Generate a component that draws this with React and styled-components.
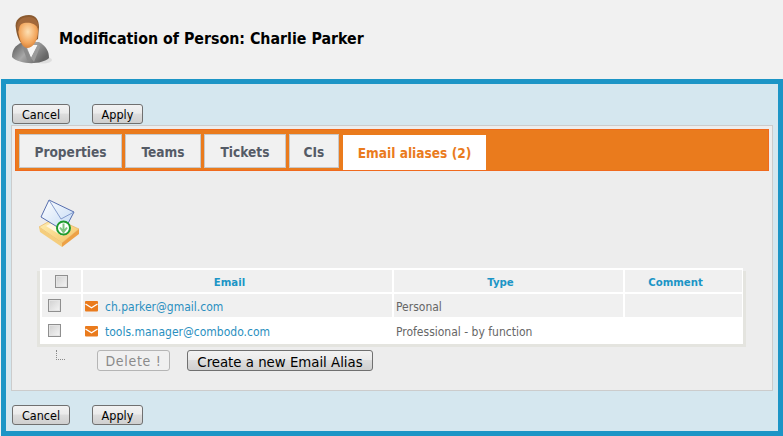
import React from "react";
import styled, { createGlobalStyle } from "styled-components";

const FONT = `"DejaVu Sans Condensed", "DejaVu Sans", sans-serif`;

const Global = createGlobalStyle`
  html, body { margin: 0; padding: 0; background: #f1f1f1; }
  body { font-family: ${FONT}; font-stretch: condensed; overflow: hidden; }
  * { box-sizing: border-box; }
`;
const Page = styled.div`width: 783px; height: 436px; display: flex; flex-direction: column;`;
const Header = styled.header`height: 79px; display: flex; align-items: center; gap: 7px; padding: 0 0 3px 11px; flex: none;`;
const Title = styled.h1`margin: 2px 0 0; font-size: 15.8px; line-height: 20px; font-weight: 700; color: #000;`;
const Main = styled.main`
  flex: 1; margin-left: 1px; border: 5px solid #1c95c6; background: #d5e7ef;
  padding: 20px 5px 0 5px; display: flex; flex-direction: column;
`;
const Actions = styled.div`display: flex; gap: 22px; padding-left: 1px; height: 20px; flex: none;`;
const Btn = styled.button`
  width: ${p => p.$w}px; height: ${p => p.$h || 20}px; padding: 1px 0 0; margin: 0;
  border: 1px solid ${p => (p.disabled ? "#b5b5b5" : "#707070")}; border-radius: 3px;
  background: ${p => (p.disabled ? "#f0f0f0" : "linear-gradient(#f2f2f2 0%, #ebebeb 45%, #dddddd 50%, #cfcfcf 100%)")};
  font-family: ${FONT}; font-stretch: condensed; font-size: ${p => p.$fs || 12.5}px;
  letter-spacing: ${p => p.$ls || 0}px; color: ${p => (p.disabled ? "#8a8a8a" : "#000")};
`;
const Panel = styled.section`
  width: 762px; height: 266px; margin-top: 1px; flex: none; border: 1px solid #cccccc; background: #ededed;
  padding: 3px 3px 0 3px; display: flex; flex-direction: column;
`;
const TabBar = styled.nav`
  height: 42px; background: #ea7b1d; border: 1px solid #f06a1e; display: flex; align-items: flex-end; padding-left: 3px; gap: 3px; flex: none;
`;
const Tab = styled.div`
  width: ${p => p.$w}px; height: ${p => (p.$active ? 35 : 34)}px; margin-bottom: ${p => (p.$active ? 0 : 2)}px;
  margin-left: ${p => (p.$active ? 1 : 0)}px;
  background: ${p => (p.$active ? "#ffffff" : "#f1f1f1")}; border: ${p => (p.$active ? "none" : "1px solid #c8c8c8")};
  color: ${p => (p.$active ? "#ea7b1d" : "#555b66")}; font-size: 13.6px; font-weight: 700;
  display: flex; align-items: center; justify-content: center; padding-top: ${p => (p.$active ? 0 : 1)}px;
`;
const Body = styled.div`padding: 28px 0 0 23px; display: flex; flex-direction: column; align-items: flex-start;`;
const MailIcon = styled.svg`display: block; width: 44px; height: 48px;`;
const Table = styled.table`
  margin: 21px 0 0 2px; width: 703px; border-collapse: separate; border-spacing: 0; background: #fff;
  table-layout: fixed; box-shadow: 3px 3px 0 #e4e4df, -3px 3px 0 #e4e4df; font-size: 12px;
`;
const Th = styled.th`
  height: 26px; background: #f0f0f0; border: 2px solid #fff; border-left-width: ${p => (p.$first ? 2 : 1)}px; border-right-width: 1px;
  color: #1c95c6; font-size: 11.3px; font-weight: 700; padding: ${p => (p.$first ? 0 : "2px 16px 0 0")}; text-align: center;
`;
const Td = styled.td`
  height: ${p => p.$h}px; padding: 2px 0 0 2px; color: #666; font-size: 12px; background: ${p => (p.$odd ? "#f0f0f0" : "#fff")};
  border-left: 1px solid #fff; border-right: 1px solid #fff; white-space: nowrap;
`;
const CheckCell = styled.td`
  height: ${p => p.$h}px; padding: 0 0 0 6px; background: ${p => (p.$odd ? "#f0f0f0" : "#fff")};
  border-left: 2px solid #fff; border-right: 1px solid #fff;
`;
const Check = styled.input.attrs({ type: "checkbox" })`
  appearance: none; display: block; width: 13px; height: 13px; margin: ${p => (p.$center ? "0 auto" : "0")};
  border: 1px solid #8f8f8f; background: linear-gradient(135deg, #d0d0d0, #f5f5f5); box-shadow: inset 0 0 0 1px #e4e4e4;
`;
const EmailLink = styled.a`display: flex; align-items: center; gap: 7px; color: #2a8fc0; font-size: 12px;`;
const EnvelopeIcon = styled.svg`display: block; flex: none;`;
const Below = styled.div`display: flex; align-items: flex-start; margin-top: 6px;`;
const Tree = styled.div`
  width: 9px; height: 10px; margin: 0 0 0 18px; border-left: 1px dotted #8a8a8a; border-bottom: 1px dotted #8a8a8a;
`;
const BelowButtons = styled.div`display: flex; gap: 17px; margin-left: 32px;`;
const FooterActions = styled(Actions)`margin-top: 14px;`;
const PersonIcon = styled.svg`display: block; flex: none; margin-top: 4px;`;

const Envelope = () => (
  <EnvelopeIcon width="13" height="11" viewBox="0 0 13 11">
    <rect width="13" height="10.5" rx="1" fill="#ea7b1d" />
    <path d="M0.5 3 L6.5 6.8 L12.5 3" fill="none" stroke="#fff" strokeWidth="1.3" />
  </EnvelopeIcon>
);

const Person = () => (
  <PersonIcon width="41" height="50" viewBox="0 0 41 50">
    <defs>
      <radialGradient id="skin" cx="0.5" cy="0.4" r="0.7">
        <stop offset="0" stopColor="#fde0b4" />
        <stop offset="0.6" stopColor="#f3a65c" />
        <stop offset="1" stopColor="#c8702c" />
      </radialGradient>
      <linearGradient id="suit" x1="0" x2="1" y1="0" y2="0.5">
        <stop offset="0" stopColor="#505050" />
        <stop offset="0.5" stopColor="#a8a8a8" />
        <stop offset="1" stopColor="#666666" />
      </linearGradient>
    </defs>
    <ellipse cx="32" cy="45" rx="9" ry="3.5" fill="#dedede" />
    <path d="M1 42 C1 35 4 30 12 27 L28 27 C35 31 38 36 38 43 C31 50 8 50 1 42Z" fill="url(#suit)" />
    <path d="M15 30 L27 30 L20 43Z" fill="#f6f6f6" />
    <path d="M13 28 L20 43 L17 47 L11 31Z" fill="#8b8b8b" />
    <path d="M27 29 L20 43 L23 47 L29 32Z" fill="#9b9b9b" />
    <path d="M5 14 C3 5 9 0 18 0 C25 0 28 5 28 12 L27 24 L14 31 C9 29 6 22 5 14Z" fill="#8a5a30" />
    <path d="M7 15 C6 8 10 6 15 6 C22 6 27 9 27 16 C27 26 22 33 16 33 C11 33 8 24 7 15Z" fill="url(#skin)" />
    <path d="M6 13 C6 5 11 2 18 2 C25 2 28 7 27 13 C24 8 18 7 13 8 C9 9 8 11 8 17Z" fill="#a2683a" />
  </PersonIcon>
);

const Mail = () => (
  <MailIcon viewBox="0 0 44 48">
    <defs>
      <linearGradient id="box" x1="0" x2="1" y1="0" y2="1">
        <stop offset="0" stopColor="#fff2b8" />
        <stop offset="1" stopColor="#f4c264" />
      </linearGradient>
      <linearGradient id="env" x1="0" x2="1" y1="0" y2="1">
        <stop offset="0" stopColor="#ffffff" />
        <stop offset="1" stopColor="#c0d8f4" />
      </linearGradient>
    </defs>
    <path d="M1 28 L17 19 L41 30 L24 44Z" fill="url(#box)" stroke="#e8b566" strokeWidth="0.7" />
    <path d="M1 28 L24 44 L24 48 L2 33Z" fill="#f5cd7c" />
    <path d="M24 44 L41 30 L41 35 L24 48Z" fill="#eda145" />
    <path d="M8 27 L19 21 L33 30 L24 37Z" fill="#fff6df" />
    <path d="M11 1 L36 13 L26 32 L3 18Z" fill="url(#env)" stroke="#4660a6" strokeWidth="0.9" />
    <path d="M11 1 L23 20 L36 13" fill="none" stroke="#6c86c0" strokeWidth="0.8" />
    <circle cx="25.5" cy="29" r="6.5" fill="#fff" stroke="#1e9a2e" strokeWidth="2" />
    <path d="M25.5 24.5 V32 M22 28.5 L25.5 33 L29 28.5" fill="none" stroke="#7cc47f" strokeWidth="2" />
  </MailIcon>
);

export default function App() {
  return (
    <Page>
      <Global />
      <Header>
        <Person />
        <Title>Modification of Person: Charlie Parker</Title>
      </Header>
      <Main>
        <Actions>
          <Btn $w={58}>Cancel</Btn>
          <Btn $w={51}>Apply</Btn>
        </Actions>
        <Panel>
          <TabBar>
            <Tab $w={103}>Properties</Tab>
            <Tab $w={76}>Teams</Tab>
            <Tab $w={82}>Tickets</Tab>
            <Tab $w={50}>CIs</Tab>
            <Tab $w={143} $active>Email aliases (2)</Tab>
          </TabBar>
          <Body>
            <Mail />
            <Table>
              <colgroup>
                <col style={{ width: 42 }} />
                <col style={{ width: 311 }} />
                <col style={{ width: 231 }} />
                <col style={{ width: 119 }} />
              </colgroup>
              <thead>
                <tr>
                  <Th $first><Check $center /></Th>
                  <Th>Email</Th>
                  <Th>Type</Th>
                  <Th>Comment</Th>
                </tr>
              </thead>
              <tbody>
                <tr>
                  <CheckCell $h={23} $odd><Check /></CheckCell>
                  <Td $h={23} $odd><EmailLink><Envelope />ch.parker@gmail.com</EmailLink></Td>
                  <Td $h={23} $odd>Personal</Td>
                  <Td $h={23} $odd></Td>
                </tr>
                <tr>
                  <CheckCell $h={27}><Check /></CheckCell>
                  <Td $h={27}><EmailLink><Envelope />tools.manager@combodo.com</EmailLink></Td>
                  <Td $h={27}>Professional - by function</Td>
                  <Td $h={27}></Td>
                </tr>
              </tbody>
            </Table>
            <Below>
              <Tree />
              <BelowButtons>
                <Btn disabled $w={73} $h={21} $fs={14} $ls={0.7}>Delete !</Btn>
                <Btn $w={186} $h={21} $fs={14.8}>Create a new Email Alias</Btn>
              </BelowButtons>
            </Below>
          </Body>
        </Panel>
        <FooterActions>
          <Btn $w={58}>Cancel</Btn>
          <Btn $w={51}>Apply</Btn>
        </FooterActions>
      </Main>
    </Page>
  );
}
